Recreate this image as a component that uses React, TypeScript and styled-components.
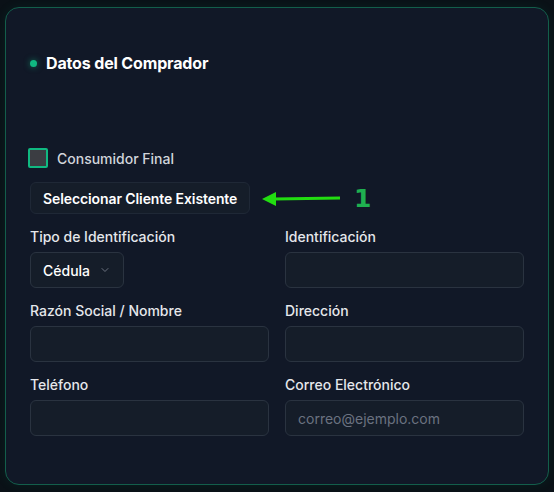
import React from "react";
import styled, { createGlobalStyle } from "styled-components";

const Global = createGlobalStyle`
  html, body { margin: 0; padding: 0; background: #0a1117; }
  body { font-family: Inter, "Noto Sans", sans-serif; -webkit-font-smoothing: antialiased; }
  * { box-sizing: border-box; }
`;

const Page = styled.div`
  width: 554px;
  height: 492px;
  padding: 7px 5px 0 5px;
  background: #0a1117;
`;

const Card = styled.section`
  position: relative;
  width: 544px;
  height: 478px;
  background: #111827;
  border: 1px solid #135e4b;
  border-radius: 14px;
  padding: 43px 24px 0 24px;
  box-shadow: 0 0 12px rgba(16, 185, 129, 0.08);
`;

const Header = styled.div`
  display: flex;
  align-items: center;
  gap: 9px;
  height: 24px;
  margin-bottom: 73px;
`;

const Dot = styled.span`
  width: 7px;
  height: 7px;
  border-radius: 50%;
  background: #10b981;
  box-shadow: 0 0 6px rgba(16, 185, 129, 0.6);
`;

const Title = styled.h2`
  margin: 0;
  font-size: 16px;
  font-weight: 700;
  color: #ffffff;
  letter-spacing: -0.15px;
`;

const CheckRow = styled.label`
  display: flex;
  align-items: center;
  gap: 9px;
  height: 20px;
  margin-left: -2px;
  margin-bottom: 14px;
`;

const Box = styled.span`
  width: 20px;
  height: 20px;
  border: 2px solid #10b981;
  background: #3b3d42;
  border-radius: 2px;
`;

const CheckText = styled.span`
  font-size: 14px;
  font-weight: 500;
  color: #d1d5db;
`;

const SelectButton = styled.button`
  display: inline-flex;
  align-items: center;
  height: 32px;
  padding: 0 12px;
  background: #151d29;
  border: 1px solid #1f2836;
  border-radius: 6px;
  color: #ffffff;
  font-family: inherit;
  font-size: 14px;
  font-weight: 600;
  letter-spacing: -0.1px;
  margin-bottom: 13px;
`;

const Grid = styled.div`
  display: grid;
  grid-template-columns: 239px 239px;
  column-gap: 16px;
  row-gap: 13px;
`;

const Field = styled.div`
  display: flex;
  flex-direction: column;
  gap: 5px;
`;

const Label = styled.span`
  font-size: 14px;
  font-weight: 500;
  line-height: 20px;
  color: #e5e7eb;
`;

const Input = styled.div<{ $placeholder?: boolean }>`
  height: 36px;
  border: 1px solid #2a3340;
  border-radius: 6px;
  background: #151d29;
  display: flex;
  align-items: center;
  padding: 0 12px;
  font-size: 14px;
  color: ${(p) => (p.$placeholder ? "#6b7280" : "#ffffff")};
`;

const Select = styled.div`
  width: 94px;
  height: 36px;
  border: 1px solid #2a3340;
  border-radius: 6px;
  background: #151d29;
  display: flex;
  align-items: center;
  gap: 9px;
  padding: 0 12px;
  font-size: 14px;
  font-weight: 500;
  color: #ffffff;
`;

const Annotation = styled.div`
  position: absolute;
  left: 256px;
  top: 177px;
  height: 28px;
  display: flex;
  align-items: center;
  gap: 12px;
`;

const Num = styled.span`
  font-family: "DejaVu Sans", sans-serif;
  font-size: 25px;
  line-height: 28px;
  font-weight: 700;
  color: #1fb050;
`;

export default function App() {
  return (
    <>
      <Global />
      <Page>
        <Card>
          <Header>
            <Dot />
            <Title>Datos del Comprador</Title>
          </Header>
          <CheckRow>
            <Box />
            <CheckText>Consumidor Final</CheckText>
          </CheckRow>
          <SelectButton>Seleccionar Cliente Existente</SelectButton>
          <Grid>
            <Field>
              <Label>Tipo de Identificación</Label>
              <Select>
                Cédula
                <svg width="14" height="14" viewBox="0 0 24 24" fill="none" stroke="#6b7280" strokeWidth="2" strokeLinecap="round" strokeLinejoin="round">
                  <path d="m6 9 6 6 6-6" />
                </svg>
              </Select>
            </Field>
            <Field>
              <Label>Identificación</Label>
              <Input />
            </Field>
            <Field>
              <Label>Razón Social / Nombre</Label>
              <Input />
            </Field>
            <Field>
              <Label>Dirección</Label>
              <Input />
            </Field>
            <Field>
              <Label>Teléfono</Label>
              <Input />
            </Field>
            <Field>
              <Label>Correo Electrónico</Label>
              <Input $placeholder>correo@ejemplo.com</Input>
            </Field>
          </Grid>
          <Annotation>
            <svg width="80" height="16" viewBox="0 0 80 16">
              <line x1="12" y1="8" x2="78" y2="7" stroke="#22dd11" strokeWidth="3" />
              <polygon points="0,8 14,1 14,15" fill="#22dd11" />
            </svg>
            <Num>1</Num>
          </Annotation>
        </Card>
      </Page>
    </>
  );
}
